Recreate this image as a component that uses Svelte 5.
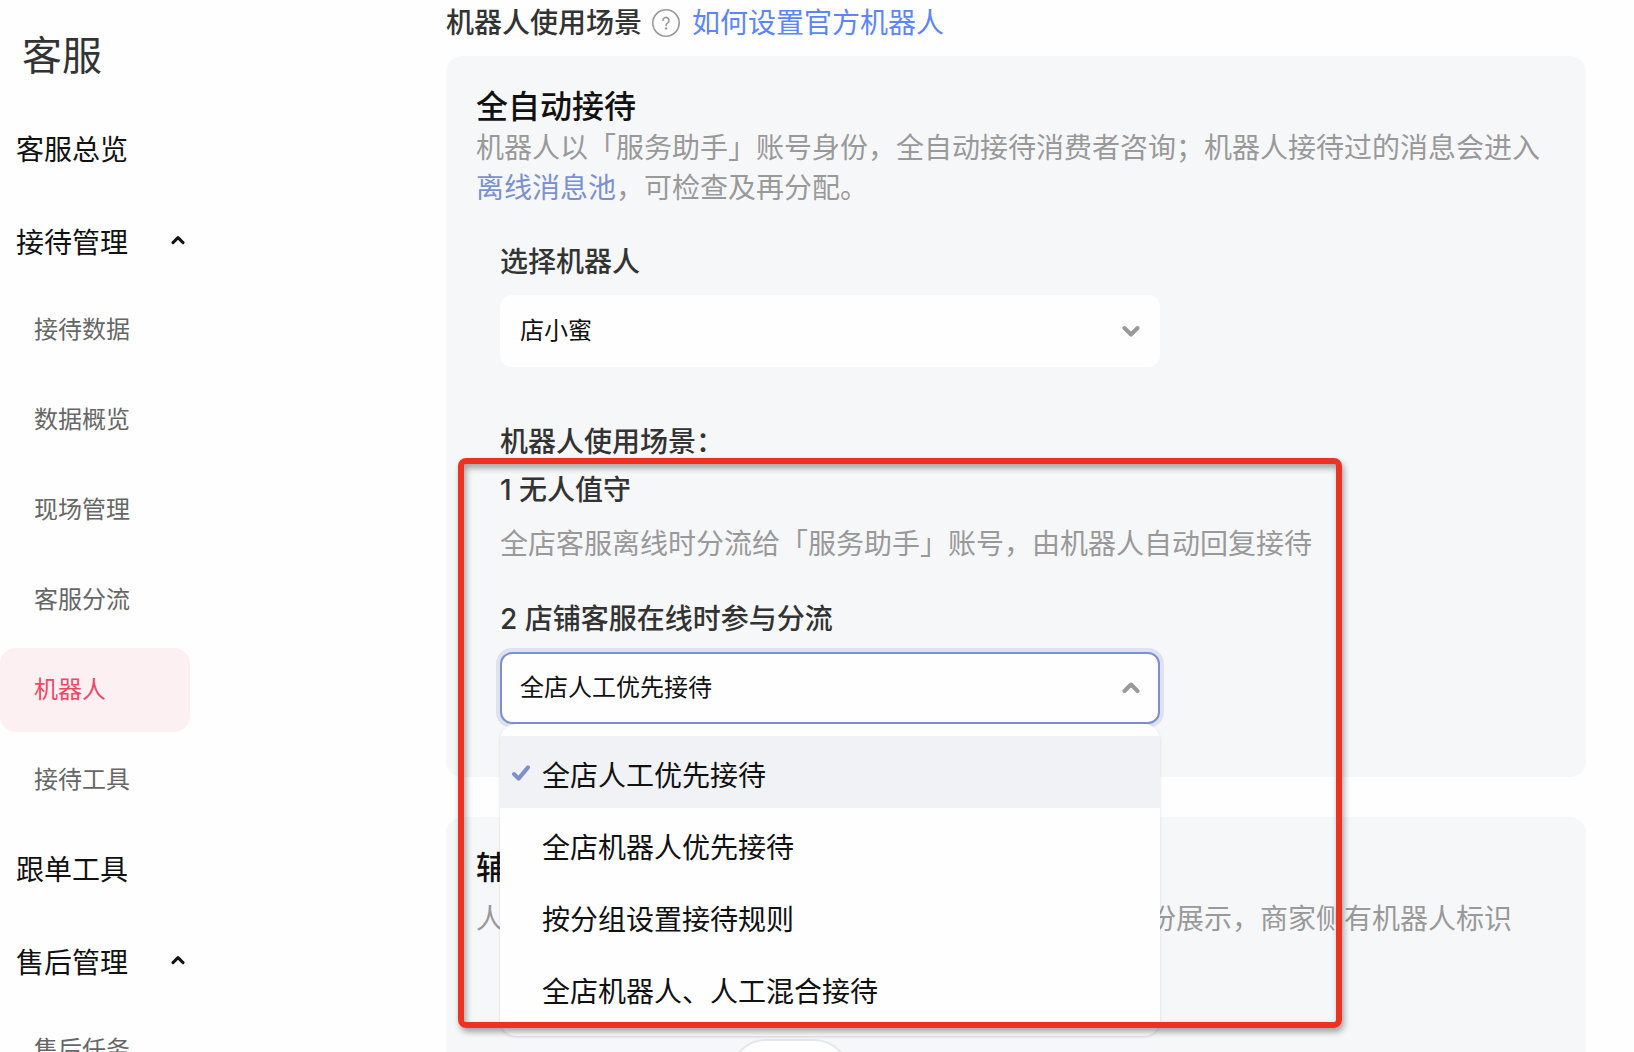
<script>
  const menu = [
    { title: '客服总览' },
    {
      title: '接待管理',
      children: ['接待数据', '数据概览', '现场管理', '客服分流', '机器人', '接待工具'],
    },
    { title: '跟单工具' },
    { title: '售后管理', children: ['售后任务'] },
  ]

  const options = [
    '全店人工优先接待',
    '全店机器人优先接待',
    '按分组设置接待规则',
    '全店机器人、人工混合接待',
  ]

  let active = $state('机器人')
  let robot = $state('店小蜜')
  let rule = $state(options[0])
</script>

<div class="page">
  <nav class="sidebar">
    <h1>客服</h1>
    {#each menu as group}
      {#if group.children}
        <button class="group foldable" type="button">
          <span>{group.title}</span>
          <svg class="fold" viewBox="0 0 14 10" aria-hidden="true">
            <path d="M2 7.6 L7 2.6 L12 7.6" />
          </svg>
        </button>
        <ul>
          {#each group.children as item}
            <li>
              <a
                href="#{item}"
                class="item"
                class:active={item === active}
                onclick={() => (active = item)}>{item}</a
              >
            </li>
          {/each}
        </ul>
      {:else}
        <a class="group" href="#{group.title}">{group.title}</a>
      {/if}
    {/each}
  </nav>

  <main>
    <header>
      <h2>机器人使用场景</h2>
      <svg class="help" viewBox="0 0 28 28" aria-hidden="true">
        <circle cx="14" cy="14" r="13.2" />
        <path d="M11 11.4 a3 3 0 1 1 4.8 2.4 c-1.3 .9 -1.8 1.4 -1.8 2.6" />
        <circle class="dot" cx="14" cy="19.4" r="1.2" />
      </svg>
      <a href="#help">如何设置官方机器人</a>
    </header>

    <section class="card">
      <h3>全自动接待</h3>
      <p class="desc">
        机器人以「服务助手」账号身份，全自动接待消费者咨询；机器人接待过的消息会进入<a
          href="#pool">离线消息池</a
        >，可检查及再分配。
      </p>

      <div class="fields">
        <label class="label" for="robot">选择机器人</label>
        <div class="select">
          <select id="robot" bind:value={robot}>
            <option>店小蜜</option>
          </select>
          <svg class="arrow" viewBox="0 0 18 14" aria-hidden="true">
            <path d="M2.5 4 L9 10.5 L15.5 4" />
          </svg>
        </div>

        <h4 class="label scene-title">机器人使用场景：</h4>
        <div class="scene">
          <h5 class="label">1 无人值守</h5>
          <p class="desc hint">全店客服离线时分流给「服务助手」账号，由机器人自动回复接待</p>
          <label class="label" for="rule">2 店铺客服在线时参与分流</label>
          <div class="select open">
            <select id="rule" bind:value={rule}>
              {#each options as option}
                <option>{option}</option>
              {/each}
            </select>
            <svg class="arrow" viewBox="0 0 18 14" aria-hidden="true">
              <path d="M2.5 10 L9 3.5 L15.5 10" />
            </svg>
            <div class="dropdown" role="listbox" aria-label="分流规则">
              {#each options as option}
                <button
                  type="button"
                  class="option"
                  role="option"
                  aria-selected={option === rule}
                  class:selected={option === rule}
                  onclick={() => (rule = option)}
                >
                  <svg class="tick" viewBox="0 0 18 16" aria-hidden="true">
                    {#if option === rule}
                      <path d="M2 9 L6.6 13.6 L16 2.4" />
                    {/if}
                  </svg>
                  <span>{option}</span>
                </button>
              {/each}
            </div>
          </div>
          <div class="highlight"></div>
        </div>
      </div>
    </section>

    <section class="card">
      <h3>辅助接待</h3>
      <p class="desc assist">
        人工接待时机器人辅助客服回复咨询消息，以客服的身份展示，商家侧有机器人标识
      </p>
      <button class="pill" type="button" aria-label="设置"></button>
    </section>
  </main>
</div>

<style>
  :global(body) {
    margin: 0;
    background: #fefefe;
  }
  .page {
    display: grid;
    grid-template-columns: 190px 1fr;
    height: 100vh;
    overflow: hidden;
    color: #111;
    font-family: Inter, 'Noto Sans CJK SC', sans-serif;
    font-size: 28px;
    line-height: 40px;
  }
  h1,
  h2,
  h3,
  h4,
  h5,
  p,
  ul {
    margin: 0;
    padding: 0;
    font-size: inherit;
    font-weight: inherit;
    list-style: none;
  }
  a {
    text-decoration: none;
  }
  button,
  select {
    font: inherit;
    color: inherit;
    border: 0;
    margin: 0;
    padding: 0;
    background: none;
    appearance: none;
    text-align: left;
  }
  svg {
    fill: none;
    stroke-linecap: round;
    stroke-linejoin: round;
  }

  .sidebar h1 {
    height: 105px;
    padding-left: 22px;
    box-sizing: border-box;
    font-size: 40px;
    line-height: 111px;
    color: #333;
  }
  .group {
    display: flex;
    align-items: center;
    width: 100%;
    height: 90px;
    box-sizing: border-box;
    padding: 0 5px 0 16px;
    color: #111;
  }
  .foldable {
    justify-content: space-between;
  }
  .foldable span {
    padding-top: 6px;
  }
  .fold {
    width: 14px;
    height: 10px;
    stroke: #111;
    stroke-width: 3;
  }
  .item {
    display: block;
    margin: 3px 0;
    padding-left: 34px;
    border-radius: 16px;
    font-size: 24px;
    line-height: 84px;
    color: #666;
  }
  li {
    display: flow-root;
  }
  .active {
    background: #fcf0f2;
    color: #ee4866;
  }

  main {
    padding: 0 48px 0 256px;
  }
  header {
    display: flex;
    align-items: center;
    height: 46px;
    margin-bottom: 10px;
  }
  header h2 {
    font-weight: 500;
    color: #333;
  }
  header a {
    color: #5c84fb;
  }
  .help {
    width: 28px;
    height: 28px;
    margin: 0 12px 0 10px;
    stroke: #999;
    stroke-width: 1.6;
  }
  .dot {
    fill: #999;
    stroke: none;
  }

  .card {
    margin-bottom: 40px;
    padding: 30px 30px 53px;
    border-radius: 16px;
    background: #f6f7f9;
  }
  .card h3 {
    font-size: 32px;
    font-weight: 500;
    line-height: 42px;
  }
  .desc {
    color: #999;
  }
  .desc a {
    color: #7b90ce;
  }
  .assist {
    margin-top: 10px;
    white-space: nowrap;
  }
  .fields {
    padding: 34px 0 0 24px;
  }
  .label {
    display: block;
    font-weight: 500;
    color: #333;
  }
  .scene-title {
    margin: 55px 0 8px;
  }
  .scene {
    position: relative;
  }
  .hint {
    margin: 14px 0 35px;
  }

  .select {
    display: grid;
    position: relative;
    max-width: 660px;
    margin-top: 13px;
  }
  .select select,
  .arrow {
    grid-area: 1 / 1;
  }
  .select select {
    height: 72px;
    padding: 0 20px;
    border-radius: 12px;
    background: #fefefe;
    font-size: 24px;
  }
  .arrow {
    place-self: center end;
    width: 18px;
    height: 14px;
    margin-right: 20px;
    stroke: #999;
    stroke-width: 4;
    pointer-events: none;
  }
  .open select {
    padding: 0 18px;
    border: 2px solid #7b90ce;
    box-shadow: 0 0 0 4px #dde1f0;
  }
  .dropdown {
    position: absolute;
    top: 100%;
    left: 0;
    right: 0;
    z-index: 1;
    padding: 12px 0;
    border-radius: 16px;
    background: #fefefe;
    box-shadow: 0 1px 3px rgba(0, 0, 0, 0.12);
  }
  .option {
    display: flex;
    align-items: center;
    gap: 12px;
    width: 100%;
    height: 72px;
    padding-left: 12px;
    color: #111;
  }
  .option span {
    padding-top: 8px;
  }
  .selected {
    background: #f1f2f6;
  }
  .tick {
    width: 18px;
    height: 16px;
    padding-top: 2px;
    stroke: #7b90ce;
    stroke-width: 4;
  }

  /* red frame drawn over the scene settings */
  .highlight {
    position: absolute;
    top: -12px;
    left: -42px;
    z-index: 2;
    width: 884px;
    height: 570px;
    box-sizing: border-box;
    border: 6px solid #ec3323;
    border-radius: 8px;
    box-shadow:
      2px 4px 6px rgba(0, 0, 0, 0.35),
      inset 2px 4px 6px rgba(0, 0, 0, 0.35);
    pointer-events: none;
  }

  .pill {
    display: block;
    width: 120px;
    height: 72px;
    margin: 100px 0 0 254px;
    border: 2px solid #e4e6ed;
    border-radius: 36px;
    background: #fefefe;
  }
</style>
